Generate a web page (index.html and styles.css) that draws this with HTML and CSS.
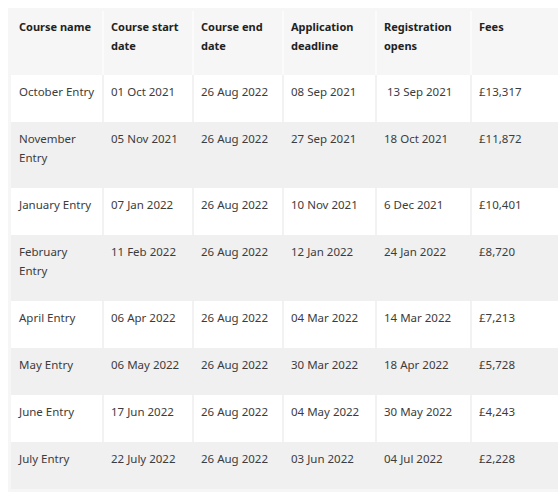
FILE: index.html
```html
<!DOCTYPE html>
<html lang="en">
<head>
<meta charset="utf-8">
<title>Course dates and fees</title>
<link rel="stylesheet" href="styles.css">
</head>
<body>
<table class="fees-table">
  <colgroup>
    <col class="c1"><col class="c2"><col class="c3"><col class="c4"><col class="c5"><col class="c6">
  </colgroup>
  <thead>
    <tr>
      <th>Course name</th>
      <th>Course start date</th>
      <th>Course end date</th>
      <th>Application deadline</th>
      <th>Registration opens</th>
      <th>Fees</th>
    </tr>
  </thead>
  <tbody>
    <tr><td>October Entry</td><td>01 Oct 2021</td><td>26 Aug 2022</td><td>08 Sep 2021</td><td>&nbsp;13 Sep 2021</td><td>£13,317</td></tr>
    <tr><td>November Entry</td><td>05 Nov 2021</td><td>26 Aug 2022</td><td>27 Sep 2021</td><td>18 Oct 2021</td><td>£11,872</td></tr>
    <tr><td>January Entry</td><td>07 Jan 2022</td><td>26 Aug 2022</td><td>10 Nov 2021</td><td>6 Dec 2021</td><td>£10,401</td></tr>
    <tr><td>February Entry</td><td>11 Feb 2022</td><td>26 Aug 2022</td><td>12 Jan 2022</td><td>24 Jan 2022</td><td>£8,720</td></tr>
    <tr><td>April Entry</td><td>06 Apr 2022</td><td>26 Aug 2022</td><td>04 Mar 2022</td><td>14 Mar 2022</td><td>£7,213</td></tr>
    <tr><td>May Entry</td><td>06 May 2022</td><td>26 Aug 2022</td><td>30 Mar 2022</td><td>18 Apr 2022</td><td>£5,728</td></tr>
    <tr><td>June Entry</td><td>17 Jun 2022</td><td>26 Aug 2022</td><td>04 May 2022</td><td>30 May 2022</td><td>£4,243</td></tr>
    <tr><td>July Entry</td><td>22 July 2022</td><td>26 Aug 2022</td><td>03 Jun 2022</td><td>04 Jul 2022</td><td>£2,228</td></tr>
  </tbody>
</table>
</body>
</html>
```

FILE: styles.css
```css
body {
  margin: 8px 0 8px 8px;
  background: #fff;
  font-family: "Noto Sans", "Open Sans", sans-serif;
  font-size: 11.5px;
  line-height: 19px;
  color: #3c3c3c;
}
.fees-table {
  border-collapse: separate;
  border-spacing: 0;
  table-layout: fixed;
  width: 550px;
  border: 3px solid #f6f6f6;
  border-right: 0;
}
.c1 { width: 91px; }
.c2 { width: 90px; }
.c3 { width: 90px; }
.c4 { width: 93px; }
.c5 { width: 95px; }
.c6 { width: 88px; }

.fees-table th,
.fees-table td {
  text-align: left;
  vertical-align: top;
  padding: 7px 4px 21px 8px;
  border-left: 2px solid #f2f2f2;
}
.fees-table th:first-child,
.fees-table td:first-child {
  border-left: 0;
  padding-right: 7px;
}
.fees-table td:not(:first-child),
.fees-table th:not(:first-child) {
  padding-left: 7px;
}
.fees-table th {
  background: #f6f6f6;
  border-left-color: #fbfbfb;
  font-weight: 700;
  font-size: 11px;
  color: #222;
  padding-top: 6px;
  padding-bottom: 20px;
}
.fees-table tbody tr:nth-child(odd) td {
  background: #fff;
}
.fees-table tbody tr:nth-child(even) td {
  background: #f0f0f0;
  border-left-color: #f0f0f0;
}
```
